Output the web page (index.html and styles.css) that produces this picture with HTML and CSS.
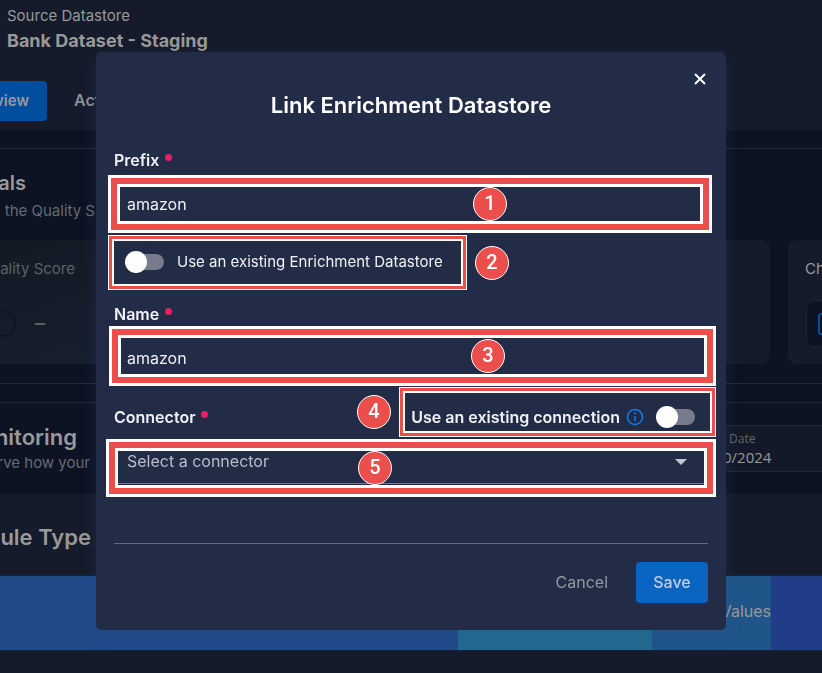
FILE: index.html
```html
<!DOCTYPE html>
<html lang="en">
<head>
<meta charset="utf-8">
<title>Link Enrichment Datastore</title>
<link rel="stylesheet" href="styles.css">
</head>
<body>
<main class="page">
  <header class="top">
    <p class="kind">Source Datastore</p>
    <h1 class="store">Bank Dataset - Staging</h1>
    <nav class="tabs">
      <a class="tab active" href="#view">view</a>
      <a class="tab" href="#act">Act</a>
    </nav>
  </header>

  <section class="totals">
    <h2 class="cut heading totals-title">als</h2>
    <p class="cut note totals-note">the Quality S</p>
    <div class="cards">
      <article class="card score">
        <p class="cut score-label">ality Score</p>
        <div class="score-row">
          <svg class="ring" width="16" height="30" viewBox="0 0 16 30"><circle cx="2" cy="15" r="13" fill="none" stroke="#10151f" stroke-width="2"/></svg>
          <span class="dash">–</span>
        </div>
      </article>
      <article class="card"></article>
      <article class="card checks">
        <p>Ch</p>
        <div class="tile"><svg width="20" height="24" viewBox="0 0 20 24"><rect x="2" y="2" width="20" height="20" rx="2" fill="none" stroke="#02509c" stroke-width="2"/></svg></div>
      </article>
    </div>
  </section>

  <section class="monitor">
    <div>
      <h2 class="cut heading monitor-title">nitoring</h2>
      <p class="cut note monitor-note">rve how your</p>
    </div>
    <div class="date"><span class="date-label">Date</span><span class="date-value">0/2024</span></div>
  </section>

  <section class="rules">
    <h2 class="cut heading rules-title">Rule Type</h2>
    <div class="treemap">
      <div class="cell blue"></div>
      <div class="cell teal"></div>
      <div class="cell steel">Values</div>
      <div class="cell indigo"></div>
    </div>
  </section>
</main>

<div class="overlay">
  <form class="dialog" role="dialog" aria-labelledby="title">
    <header class="dialog-head">
      <h2 id="title">Link Enrichment Datastore</h2>
      <button class="close" type="button" aria-label="Close"><svg width="12" height="12" viewBox="0 0 12 12"><path d="M1 1 11 11M11 1 1 11" stroke="#fff" stroke-width="2"/></svg></button>
    </header>

    <label class="label" for="prefix">Prefix <i class="dot"></i></label>
    <div class="field">
      <input class="text" id="prefix" type="text" value="amazon">
      <span class="mark thick m1"></span><span class="step s1">1</span>
    </div>

    <div class="field existing">
      <input class="switch" id="existing" type="checkbox">
      <label for="existing">Use an existing Enrichment Datastore</label>
      <span class="mark m2"></span><span class="step s2">2</span>
    </div>

    <label class="label" for="name">Name <i class="dot"></i></label>
    <div class="field">
      <input class="text" id="name" type="text" value="amazon">
      <span class="mark thick m3"></span><span class="step s3">3</span>
    </div>

    <div class="field connector-row">
      <label class="label" for="connector">Connector <i class="dot"></i></label>
      <div class="reuse">
        <label for="reuse">Use an existing connection</label>
        <svg class="info" width="18" height="18" viewBox="0 0 18 18"><circle cx="9" cy="9" r="7.5" fill="none" stroke="#0b7bea" stroke-width="1.6"/><path d="M9 8v5" stroke="#0b7bea" stroke-width="1.6"/><circle cx="9" cy="5.4" r="1" fill="#0b7bea"/></svg>
        <input class="switch" id="reuse" type="checkbox">
      </div>
      <span class="mark m4"></span><span class="step s4">4</span>
    </div>
    <div class="field">
      <select class="select" id="connector"><option>Select a connector</option></select>
      <svg class="arrow" width="12" height="6" viewBox="0 0 12 6"><path d="M0 0H12L6 6Z" fill="#c3c6d2"/></svg>
      <span class="mark thick m5"></span><span class="step s5">5</span>
    </div>

    <footer class="actions">
      <button class="btn" type="button">Cancel</button>
      <button class="btn save" type="submit">Save</button>
    </footer>
  </form>
</div>
</body>
</html>
```
FILE: styles.css
```css
* { box-sizing: border-box; }
body {
  margin: 0;
  background: #0d1322;
  color: #999;
  font: 16px/24px Inter, "Noto Sans", sans-serif;
  overflow: hidden;
}
h1, h2, p { margin: 0; }
button, input, select { font: inherit; }

.page { min-height: 100vh; display: flex; flex-direction: column; }

/* Line that runs on from beyond the left edge of the window */
.cut { display: flex; justify-content: flex-end; white-space: nowrap; }
.heading { font-size: 22px; line-height: 32px; font-weight: 600; }
.note { font-size: 15px; color: #666a73; }

.top { height: 130px; padding-top: 4px; background: #151b2a; }
.kind, .store { padding-left: 7px; }
.kind { font-size: 15px; }
.store { font-size: 18px; line-height: 26px; font-weight: 700; }
.tabs { display: flex; margin-top: 27px; }
.tab {
  display: flex; justify-content: flex-end;
  height: 40px;
  line-height: 39px; font-weight: 600;
  color: #8b8e95; text-decoration: none;
}
.tab.active { width: 47px; padding-right: 18px; background: #024e9e; color: #999; border-radius: 0 4px 4px 0; font-size: 15px; }
.tab:last-child { padding-left: 27px; }

.totals { margin-top: 18px; padding-top: 18px; border-top: 1px solid #222836; border-bottom: 1px solid #222836; height: 236px; }
.totals-title { width: 26px; font-size: 20px; }
.totals-note { width: 95px; }
.cards { display: grid; grid-template-columns: 1fr 1fr 34px; gap: 18px; margin-top: 17px; }
.card { height: 124px; background: #151b29; border-radius: 8px; }
.card.score { padding-top: 17px; background: linear-gradient(160deg, #131925, #1a2332); border-radius: 0; color: #5c6168; }
.score-label { width: 75px; font-size: 15px; }
.score-row { display: flex; align-items: center; gap: 19px; margin-top: 27px; }
.dash { font-size: 20px; color: #666; }
.card.checks { padding: 17px 0 0 17px; border-radius: 8px 0 0 8px; overflow: hidden; font-size: 15px; }
.card.checks p { margin-right: -4px; }
.tile { display: flex; align-items: center; margin-top: 19px; margin-left: 1px; height: 47px; width: 40px; padding-left: 10px; background: #0d1322; border: 1px solid #1e2430; border-radius: 8px; }
.tile svg { flex: none; }

.monitor { display: flex; justify-content: space-between; margin-top: 18px; height: 92px; border-top: 1px solid #222836; padding-top: 18px; }
.monitor-title { width: 77px; }
.monitor-note { width: 90px; margin-top: -2px; }
.date { display: flex; flex-direction: column; width: 120px; height: 47px; margin-top: 4px; padding: 4px 0 0 21px; background: #131928; border: solid #222836; border-width: 1px 0; font-family: "Open Sans", sans-serif; }
.date-label { padding-left: 6px; font-size: 12px; line-height: 18px; color: #666; }
.date-value { font-size: 15px; line-height: 18px; }

.rules { flex: 1; background: #151b2a; padding-top: 27px; }
.rules-title { width: 91px; }
.treemap { display: grid; grid-template-columns: 458fr 194fr 119fr 51fr; height: 76px; margin-top: 22px; border: solid #14243b; border-width: 1px 0; }
.cell { display: flex; align-items: center; justify-content: flex-end; padding-bottom: 4px; }
.blue { background: #204a88; }
.teal { background: #226b8f; }
.steel { background: #205589; }
.indigo { background: #213d88; }

.overlay { position: fixed; inset: 0; padding: 52px 96px; }
.dialog {
  padding: 0 18px 27px;
  background: #232c47;
  border-radius: 5px;
  box-shadow: 0 6px 16px rgba(40, 84, 150, .25);
  color: #f0f1f4;
}
.dialog-head { position: relative; height: 88px; padding-top: 37px; }
.dialog-head h2 { font-size: 22px; line-height: 32px; font-weight: 600; text-align: center; color: #fff; }
.close { position: absolute; top: 15px; right: -4px; display: grid; place-items: center; width: 24px; height: 24px; padding: 0; border: 0; background: none; }
.label { display: flex; align-items: center; gap: 6px; height: 40px; font-weight: 600; }
.dot { width: 7px; height: 7px; margin-bottom: 6px; border-radius: 50%; background: #e91e63; }
.field { position: relative; }
.text, .select { display: block; width: 100%; padding: 0 13px; border: 0; border-radius: 0; background: none; color: #f0f1f4; outline: 0; }
.text { height: 48px; }
.select { appearance: none; height: 45px; border-bottom: 1px solid #777b88; color: #b9bcc8; }
.arrow { position: absolute; right: 21px; top: 20px; }
.existing { display: flex; align-items: center; gap: 13px; height: 66px; padding: 2px 0 0 11px; font-size: 15px; }
.connector-row { display: flex; justify-content: space-between; align-items: center; height: 57px; padding: 13px 13px 0 0; }
.reuse { display: flex; align-items: center; gap: 6px; font-weight: 600; }
.reuse .switch { margin-left: 6px; }
.switch { appearance: none; display: grid; align-items: center; width: 39px; height: 22px; margin: 0; flex: none; }
.switch::before, .switch::after { content: ""; grid-area: 1 / 1; }
.switch::before { height: 16px; margin-left: 8px; border-radius: 8px; background: #777b8b; }
.switch::after { width: 22px; height: 22px; border-radius: 50%; background: #fff; }

.actions { display: flex; justify-content: flex-end; align-items: center; gap: 28px; margin-top: 59px; padding-top: 18px; border-top: 1px solid #626881; }
.btn { height: 41px; padding: 0 0 2px; border: 0; background: none; color: #9496a0; }
.btn.save { width: 72px; border-radius: 4px; background: #0a64c2; color: #c3cdde; font-weight: 500; }

/* Callout frames and step numbers drawn over the form */
.mark { position: absolute; pointer-events: none; border: 1px solid #fff; box-shadow: inset 0 0 0 3px #ec4e4b, inset 0 0 0 5px #fff; }
.mark.thick { border-width: 3px; box-shadow: inset 0 0 0 6px #ec4e4b, inset 0 0 0 9px #fff; }
.m1 { inset: -5px -4px -5px -6px; }
.m2 { top: 7px; bottom: 4px; left: -6px; right: 241px; }
.m3 { inset: -8px -8px -4px -5px; }
.m4 { top: 5px; bottom: 2px; left: 285px; right: -8px; }
.m5 { inset: 0 -8px -13px -8px; }
.step {
  position: absolute;
  width: 34px; height: 34px;
  border: 1px solid #fff; border-radius: 50%;
  background: #ec4e4b; color: #fff;
  font: 500 20px/31px Roboto, sans-serif; text-align: center;
}
.s1 { left: 359px; top: 7px; }
.s2 { left: 361px; top: 18px; }
.s3 { left: 357px; top: 5px; }
.s4 { left: 243px; top: 13px; }
.s5 { left: 244px; top: 12px; }
```
